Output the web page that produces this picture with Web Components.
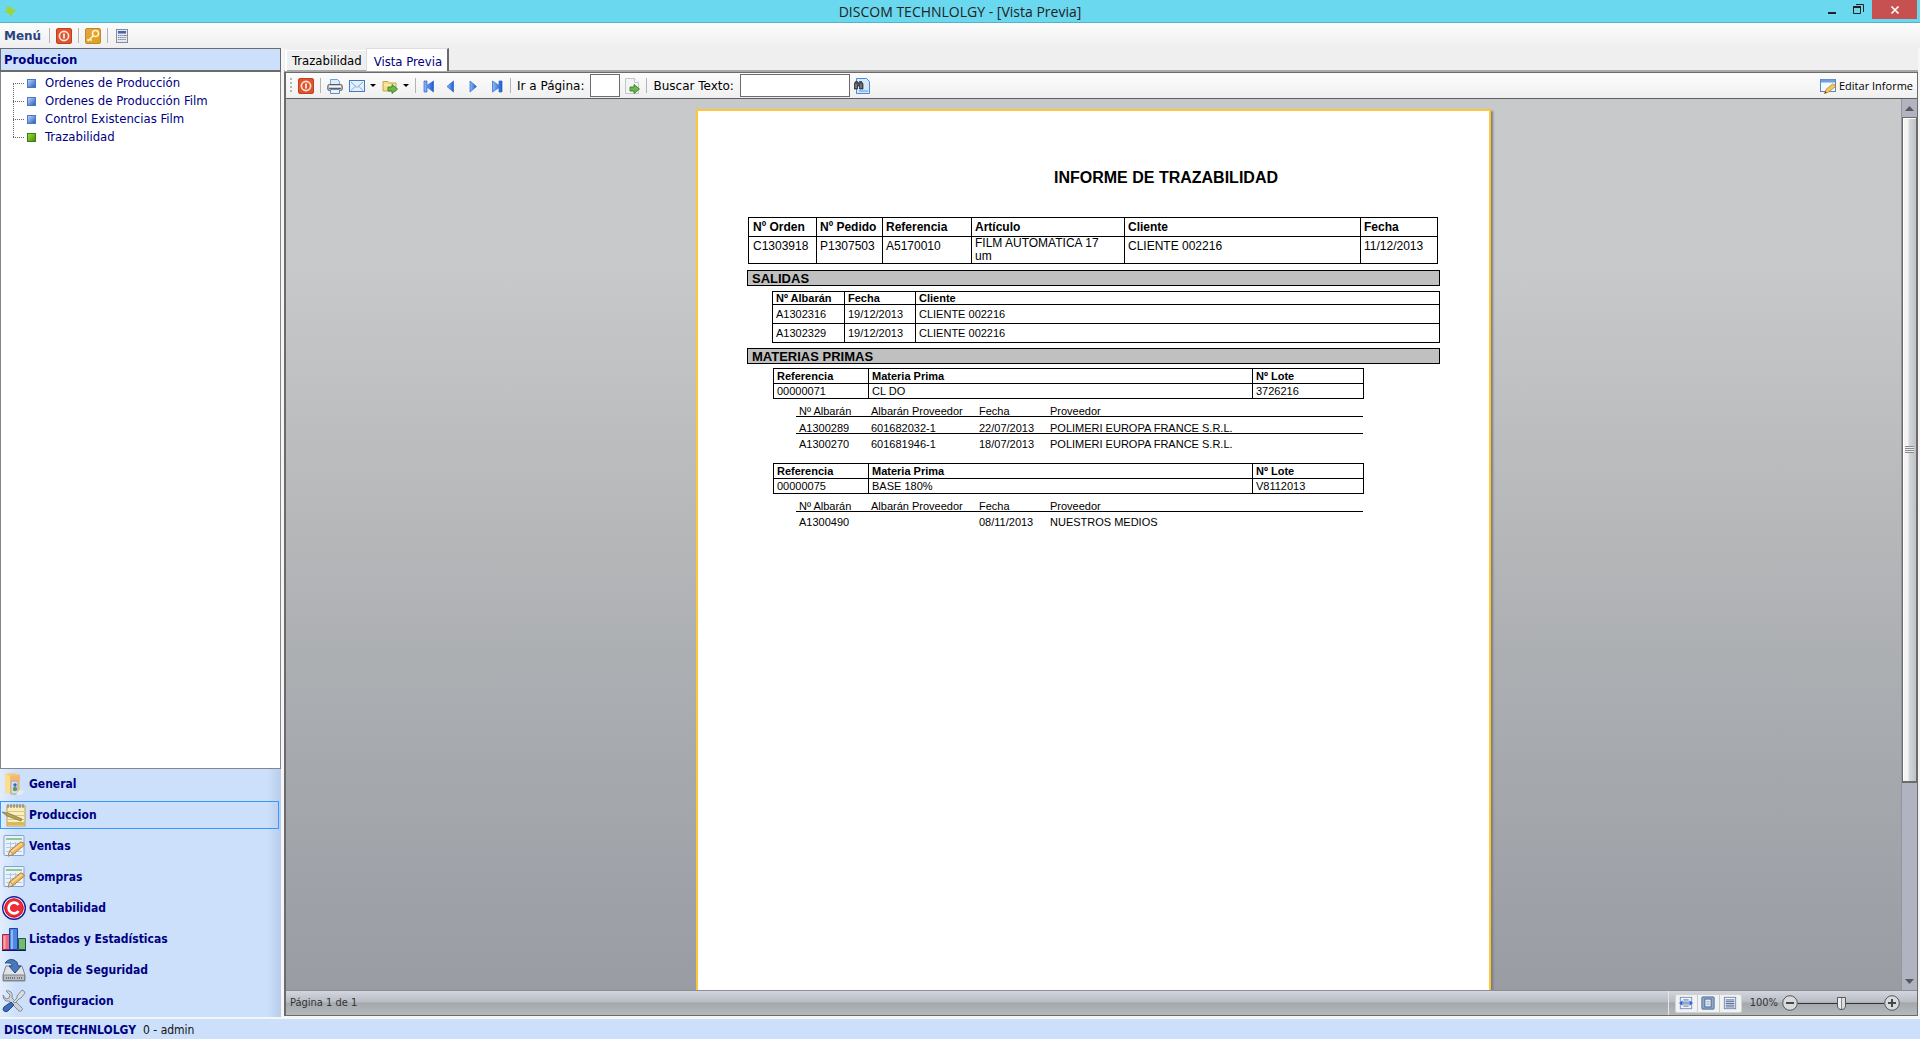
<!DOCTYPE html>
<html lang="es">
<head>
<meta charset="utf-8">
<title>DISCOM TECHNLOLGY - [Vista Previa]</title>
<style>
  :root {
    --ui: "DejaVu Sans Condensed", "DejaVu Sans", sans-serif;
    --wide: "DejaVu Sans", sans-serif;
    --segoe: "Open Sans", "Noto Sans", sans-serif;
    --navy: #00007f;
    --pale: #cce0fc;
  }
  body { margin: 0; font: 13px/18px var(--ui); color: #000; background: #fff; }
</style>
</head>
<body>
<app-window></app-window>
<script>
function define(name, css, html, setup) {
  const t = document.createElement('template');
  t.innerHTML = `<style>*{box-sizing:border-box}:host{box-sizing:border-box;display:block}${css}</style>${html}`;
  customElements.define(name, class extends HTMLElement {
    constructor() {
      super();
      this.attachShadow({ mode: 'open' }).append(t.content.cloneNode(true));
    }
    connectedCallback() { if (setup) setup.call(this, this.shadowRoot); }
  });
}

const folder = '<path d="M1 3.500h5l1.500 1.500H14v8H1z" fill="#f5dd86" stroke="#c9a548"/><path d="M2 7h11" stroke="#fff6c8"/>';
const greenArrow = '<path d="M6 9h4V6.500l5.500 4.500-5.500 4.500V13H6z" fill="#6db74a" stroke="#36812b" stroke-width=".9"/>';
const sheet = `<rect x="2" y="1.500" width="20" height="20" rx="1" fill="#e9f2fb" stroke="#7fa3cf"/><path d="M4 5h16" stroke="#8fc79a" stroke-width="2"/><path d="M4 9.500h16M4 13.500h16M4 17.500h16M8.500 8v12M13.500 8v12" stroke="#b4c9e8"/><path d="M6 22l2-5.500L18.500 8q3-.5 4 3L11 20.500z" fill="#efb85c" stroke="#b8813a"/><path d="M9 18L20 9.500" stroke="#fbdc9c" stroke-width="1.500"/><path d="M6 22l2-5.500 3 4z" fill="#f3dfbf" stroke="#8c6a3d" stroke-width=".6"/>`;
const power = '<rect x=".5" y=".5" width="15" height="15" rx="1.500" fill="url(#r)" stroke="#c2401f"/><circle cx="8" cy="8" r="4.600" fill="none" stroke="#ffe3d8" stroke-width="1.700"/><path d="M8 5.500v5" stroke="#fff" stroke-width="1.600"/>';
const navBar = '<linearGradient id="b" x1="0" x2="1"><stop stop-color="#8fbcf5"/><stop offset="1" stop-color="#1e5bd0"/></linearGradient>';
const small = body => `<g transform="translate(1 1) scale(.875)">${body}</g>`;
const ICONS = {
  star: [16, '<path d="M8 3l2 4 5 1-4 3-2.500 4L7 11.500 2 10l3-2-.5-4L7 5.500z" fill="#9bd53c"/>'],
  power: [16, '<linearGradient id="r" x2="0" y2="1"><stop stop-color="#e8512b"/><stop offset="1" stop-color="#d8562f"/></linearGradient>' + power],
  key: [16, '<linearGradient id="k" x2="1" y2="1"><stop stop-color="#e9a24a"/><stop offset="1" stop-color="#d9a312"/></linearGradient><rect x=".5" y=".5" width="15" height="15" rx="1.500" fill="url(#k)" stroke="#bf8a2b"/><circle cx="10.500" cy="5.500" r="3" fill="none" stroke="#fff3d0" stroke-width="1.600"/><path d="M8.500 7.500L3 13M5 11l1.600 1.600M3 13v-2" stroke="#fff3d0" stroke-width="1.500" fill="none"/>'],
  calc: [16, '<rect x="2.500" y="1.500" width="11" height="13" fill="#e6e9ee" stroke="#868c98"/><rect x="4" y="3" width="8" height="2.500" fill="#3d66b8"/><path d="M4 7.500h8M4 9.500h8M4 11.500h8" stroke="#7c8aa6" stroke-dasharray="1.500 .6"/><path d="M10.500 7.500h2" stroke="#e0503e"/>'],
  blue: [9, '<linearGradient id="q" x2="1" y2="1"><stop stop-color="#c3dcff"/><stop offset="1" stop-color="#2258b8"/></linearGradient><rect x=".5" y=".5" width="8" height="8" fill="url(#q)" stroke="#4a78c4"/>'],
  green: [9, '<linearGradient id="q" x2="1" y2="1"><stop stop-color="#a5e23c"/><stop offset="1" stop-color="#3c8a04"/></linearGradient><rect x=".5" y=".5" width="8" height="8" fill="url(#q)" stroke="#3f7d10"/>'],
  print: [16, '<path d="M3.500 7V1.500h7l2 2V7" fill="#dcedfb" stroke="#6f9fcd"/><rect x=".8" y="6.500" width="14.400" height="6" rx="1.500" fill="#c7ccd2" stroke="#565d66"/><path d="M2 8.500h12" stroke="#f4f6f8"/><path d="M2 10.500h12" stroke="#5b6168"/><path d="M3.500 11.500h9v4h-9z" fill="#e6f3ff" stroke="#6f8fb3"/>'],
  mail: [16, '<rect x=".5" y="2.500" width="15" height="11" fill="#e5f0fd" stroke="#4779bd"/><path d="M2 4l6 5.500L14 4M2 12.500l4.500-4.300M14 12.500L9.500 8.200" fill="none" stroke="#80a9dc"/>'],
  export: [16, folder + greenArrow],
  first: [16, navBar + '<path d="M2 3h3v4.500L11.500 3v11L5 9v5H2z" fill="url(#b)" stroke="#2866cc" stroke-width=".7"/>'],
  prev: [16, navBar + '<path d="M9.500 3v11L3 8.500z" fill="url(#b)" stroke="#2866cc" stroke-width=".7"/>'],
  next: [16, navBar + '<path d="M4 3v11l6.500-5.500z" fill="url(#b)" stroke="#2866cc" stroke-width=".7"/>'],
  last: [16, navBar + '<path d="M4.500 3L11 7.500V3h3v11h-3V9.500L4.500 14z" fill="url(#b)" stroke="#2866cc" stroke-width=".7"/>'],
  go: [16, '<path d="M1.500 .5h9l4 4v11h-13z" fill="#f3f4f4" stroke="#c3c7c9"/><path d="M10.500 .5v4h4" fill="#fff" stroke="#c3c7c9"/>' + greenArrow],
  find: [16, '<path d="M2.500 .5h10l3 3v12h-13z" fill="#d5e8fc" stroke="#4c8ad6"/><path d="M5 13h9" stroke="#8fc0f3" stroke-width="2"/><path d="M0 6l1.500-2.500h2L4 5h1l.5-1.500h2L9 6v5H5.500V8h-2v3H0z" fill="#4c5058" stroke="#24262b" stroke-width=".7"/><path d="M2 6v4M7 6v4" stroke="#a8adb5" stroke-width=".8"/>'],
  edit: [16, '<rect x=".5" y="1.500" width="15" height="12" fill="#f4f9ff" stroke="#5b87c0"/><path d="M1 3h14" stroke="#6f9fe0" stroke-width="3"/><path d="M4.500 15.500l1.500-4L12.500 6q2.500 0 3 2.500L8.500 14z" fill="#f4c55a" stroke="#b98428" stroke-width=".8"/><path d="M4.500 15.500l.8-2.200 1.400 1.400z" fill="#4b3a20"/>'],
  fit: [16, small('<rect x="1.500" y="1.500" width="13" height="13" fill="#eef3fa" stroke="#6f8db8"/><path d="M5 4.500h6M4 7h8M4 9h8M5 11.500h6" stroke="#44639a"/><path d="M0 8l4-3v6zM16 8l-4-3v6z" fill="#2c66da"/>')],
  page: [16, small('<rect x="1" y="1" width="14" height="14" rx="1" fill="#8fa9cc" stroke="#47658f"/><rect x="4.500" y="3.500" width="7" height="9" fill="#fff" stroke="#3c5888"/><path d="M6 6h4M6 8h4M6 10h4" stroke="#7088ad" stroke-width=".8"/>')],
  width: [16, small('<rect x="1.500" y="1.500" width="13" height="13" fill="#f2f5fa" stroke="#6682b0"/><path d="M3 4.500h10M3 6.500h10M3 8.500h10M3 10.500h10M3 12.500h10" stroke="#3d527f"/>')],
  general: [24, '<path d="M3 2l9-1 6 2v19l-6 1-9-3z" fill="#f6c878"/><path d="M3 2l5 2v18l-5-2z" fill="#fbdf8c"/><path d="M8 4l10-1v6H8z" fill="#f3b871"/><path d="M9 9h7v13H9z" fill="#d9dde4" stroke="#a3a8b2"/><circle cx="13" cy="13" r="1.700" fill="#3a62c8"/><circle cx="13" cy="17" r="2.200" fill="#4fa25c"/><path d="M17 18l6 1-4 4h-5z" fill="#e8eaf0"/>'],
  produccion: [24, '<rect x="5" y="3" width="18" height="20" fill="#faeebb" stroke="#b9a05f"/><path d="M6 8.500h16M6 12.500h16M6 16.500h16" stroke="#d6c68c"/><path d="M5 20.500h18" stroke="#d8b95a" stroke-width="3"/><path d="M6 1v4M9 1v4M12 1v4M15 1v4M18 1v4M21 1v4" stroke="#77706a"/><path d="M0 9l6 1 14 6-1 2L5 13z" fill="#b4a557" stroke="#7c7038" stroke-width=".7"/>'],
  sheet: [24, sheet],
  contab: [24, '<circle cx="12" cy="12" r="11.300" fill="#fff" stroke="#1a1a96" stroke-width="1.400"/><circle cx="12" cy="12" r="9.300" fill="#ee2b36" stroke="#c01020"/><path d="M16.500 9a5.400 5.400 0 1 0 0 6" fill="none" stroke="#fff" stroke-width="2.600"/>'],
  chart: [24, '<path d="M0 23.300h24" stroke="#12127a" stroke-width="1.400"/><path d="M.5 7.500h7v15h-7z" fill="#ef6b7b" stroke="#a82540"/><path d="M7.500 1.500h8v21h-8z" fill="#4d87e2" stroke="#1e3f9f"/><path d="M10 3v19" stroke="#8fb9f5" stroke-width="2"/><path d="M16.500 11.500h7v11h-7z" fill="#75b979" stroke="#1d5c3a"/><path d="M2.500 9v13" stroke="#f9a6ae" stroke-width="2"/>'],
  backup: [24, '<path d="M4 8h16l3 9v6H1v-6z" fill="#dfe2e6" stroke="#80858c"/><path d="M1.500 17h21v5.500h-21z" fill="#b9bdc3" stroke="#80858c"/><path d="M4 20h9M15 20h6" stroke="#71767e" stroke-width="2" stroke-dasharray="1 1"/><path d="M3 5q4-5 9-3 4 1.500 4 6h3l-6 7-6-7h3q0-4-7-3z" fill="#4a78b8" stroke="#274f8c"/>'],
  tools: [24, '<path d="M4 2l4 4-1 3-3 1-3-4q0 5 3 6l3 0 10 10q2 1 3-1t0-2L10 9q1-4-1-6T4 2z" fill="#cfd4da" stroke="#878d96"/><path d="M22 2l-2-1-5 6v2l-4 4 2 1 4-4 2-1 4-5z" fill="#d9dde2" stroke="#878d96"/><path d="M9 13l3 3-6 6q-2 1.500-4 0t0-4z" fill="#3e6db8" stroke="#254a86"/>'],
};

customElements.define('ui-icon', class extends HTMLElement {
  connectedCallback() {
    if (this.shadowRoot) return;
    const [n, body] = ICONS[this.getAttribute('name')];
    this.attachShadow({ mode: 'open' }).innerHTML =
      `<style>:host{display:block;flex:none;width:${n}px;height:${n}px}svg{display:block}</style><svg width="${n}" height="${n}" viewBox="0 0 ${n} ${n}" aria-hidden="true">${body}</svg>`;
  }
});

const BTN = 'button{border:0;background:none;padding:0;margin:0;color:inherit;font:inherit;display:flex;align-items:center}';

define('title-bar', `
  :host{display:grid;grid-template-columns:1fr auto 1fr;height:23px;background:#6ad8ee;border-bottom:1px solid #52b3cb;align-items:start;color:#222}
  ui-icon{margin:2px}
  h1{margin:0;font:14px/23px var(--segoe)}
  .win{display:flex;justify-content:flex-end;padding-right:3px}
  ${BTN} button{height:19px;width:26px;justify-content:center}
  .close{width:45px;background:#c75050}
`, `<ui-icon name="star"></ui-icon><h1><slot></slot></h1>
  <div class="win">
    <button aria-label="Minimizar"><svg width="12" height="12"><path d="M1 9h8" stroke="#222" stroke-width="2"/></svg></button>
    <button aria-label="Restaurar"><svg width="12" height="12"><path d="M3 .5h7.500V8M.5 3h7v6.500h-7z" fill="none" stroke="#222"/><path d="M0 3h8" stroke="#222" stroke-width="2"/></svg></button>
    <button class="close" aria-label="Cerrar"><svg width="10" height="10"><path d="M1.500 1.500l7 7M8.500 1.500l-7 7" stroke="#fff" stroke-width="1.700"/></svg></button>
  </div>`);

define('menu-bar', `
  :host{display:flex;height:25px;align-items:center;gap:6px;padding:0 4px;background:linear-gradient(#fcfcfc,#efefef)}
  ${BTN} .menu{font:bold 12px/18px var(--wide);color:#2a4480;padding-right:2px}
  i{width:1px;height:15px;background:#b4b4b4}
`, `<button class="menu">Menú</button><i></i>
  <button aria-label="Salir"><ui-icon name="power"></ui-icon></button><i></i>
  <button aria-label="Clave"><ui-icon name="key"></ui-icon></button><i></i>
  <button aria-label="Calculadora"><ui-icon name="calc"></ui-icon></button>`);

define('tree-item', `
  :host{display:flex;height:18px;align-items:center;position:relative}
  :host::before{content:"";position:absolute;left:0;top:-9px;height:18px;border-left:1px dotted #666}
  :host(:first-child)::before{display:none}
  .line{width:11px;border-top:1px dotted #666;margin-right:3px}
  a{color:var(--navy);text-decoration:none;margin-left:9px}
`, `<span class="line"></span><ui-icon name="blue"></ui-icon><a href="#"><slot></slot></a>`,
function (root) { if (this.hasAttribute('icon')) root.querySelector('ui-icon').replaceWith(Object.assign(document.createElement('template'), { innerHTML: `<ui-icon name="${this.getAttribute('icon')}"></ui-icon>` }).content); });

define('nav-item', `
  :host{height:28px}
  button{all:unset;box-sizing:border-box;display:flex;align-items:center;gap:3px;width:100%;height:28px;padding-left:2px;font:bold 12px/18px var(--ui);color:var(--navy)}
  :host([selected]) button{border:1px solid #3399ff;padding-left:1px}
`, `<button><span class="ic"></span><span><slot></slot></span></button>`,
function (root) { root.querySelector('.ic').innerHTML = `<ui-icon name="${this.getAttribute('icon')}"></ui-icon>`; });

define('side-panel', `
  :host{display:flex;flex-direction:column}
  h2{margin:0;height:24px;border:1px solid #6b6b6b;border-width:1px 1px 2px;background:var(--pale);font:bold 13px/21px var(--ui);color:var(--navy);padding:0 3px}
  .tree{flex:1;background:#fff;border:1px solid #85858c;border-top:0;padding:2px 0 0 12px}
  nav{display:flex;flex-direction:column;gap:3px;padding:1px 2px 2px 0;background:linear-gradient(90deg,#e2edfd,var(--pale) 16px calc(100% - 14px),#b9cdeb)}
`, `<h2>Produccion</h2>
  <div class="tree"><tree-item>Ordenes de Producción</tree-item><tree-item>Ordenes de Producción Film</tree-item><tree-item>Control Existencias Film</tree-item><tree-item icon="green">Trazabilidad</tree-item></div>
  <nav><nav-item icon="general">General</nav-item><nav-item icon="produccion" selected>Produccion</nav-item><nav-item icon="sheet">Ventas</nav-item><nav-item icon="sheet">Compras</nav-item><nav-item icon="contab">Contabilidad</nav-item><nav-item icon="chart">Listados y Estadísticas</nav-item><nav-item icon="backup">Copia de Seguridad</nav-item><nav-item icon="tools">Configuracion</nav-item></nav>`);

define('tab-strip', `
  :host{display:flex;height:25px;background:#efefef;box-shadow:inset 0 -1px #6b6b6b,inset 0 -3px #a9a9a9;padding-left:1px}
  button{all:unset;box-sizing:border-box;font:13px/18px var(--ui);height:21px;padding:0 4px 0 5px;border:1px solid #fff;border-width:1px 0 0 2px;margin-top:2px}
  .on{background:#fff;color:var(--navy);height:23px;margin-top:0;padding:3px 5px 0 7px;border:1px solid #ddd;border-right:2px solid #6b6b6b;border-bottom:0}
`, `<button>Trazabilidad</button><button class="on">Vista Previa</button>`);

define('tool-bar', `
  :host{display:flex;height:26px;align-items:center;gap:6px;padding:0 4px;background:linear-gradient(#fcfcfc,#f0f0f0);border-bottom:1px solid #5f5f5f;font:12px/18px var(--wide)}
  ${BTN} .grip{width:2px;height:15px;background:repeating-linear-gradient(#b5b5b5 0 2px,transparent 2px 4px)}
  i{width:1px;height:15px;background:#b4b4b4}
  .drop{width:5px;height:16px}
  .drop::before{content:"";border:3px solid transparent;border-top-color:#000;border-bottom:0;margin:0 -1px}
  .set{display:flex;gap:4px;align-items:center}
  input{height:23px;border:1px solid #6b6b6b;background:#fff;padding:0 3px;margin:0;font:inherit;outline:0}
  #pag{width:30px}#txt{width:110px}
  .edit{margin-left:auto;gap:3px;font:11px/18px var(--segoe)}
`, `<span class="grip"></span>
  <button aria-label="Cerrar"><ui-icon name="power"></ui-icon></button><i></i>
  <button aria-label="Imprimir"><ui-icon name="print"></ui-icon></button>
  <button aria-label="Enviar"><ui-icon name="mail"></ui-icon></button><button class="drop" aria-label="Opciones de envío"></button>
  <button aria-label="Exportar"><ui-icon name="export"></ui-icon></button><button class="drop" aria-label="Opciones de exportación"></button><i></i>
  <button aria-label="Primera"><ui-icon name="first"></ui-icon></button>
  <button aria-label="Anterior"><ui-icon name="prev"></ui-icon></button>
  <button aria-label="Siguiente"><ui-icon name="next"></ui-icon></button>
  <button aria-label="Última"><ui-icon name="last"></ui-icon></button><i></i>
  <label for="pag">Ir a Página:</label>
  <span class="set"><input id="pag"><button aria-label="Ir"><ui-icon name="go"></ui-icon></button></span><i></i>
  <label for="txt">Buscar Texto:</label>
  <span class="set"><input id="txt"><button aria-label="Buscar"><ui-icon name="find"></ui-icon></button></span>
  <button class="edit"><ui-icon name="edit"></ui-icon>Editar Informe</button>`);

const lot = (ref, mat, lote, rows) => `
  <table class="lot"><colgroup><col class="c95"><col><col class="c111"></colgroup>
    <tr><th>Referencia</th><th>Materia Prima</th><th>Nº Lote</th></tr>
    <tr><td>${ref}</td><td>${mat}</td><td>${lote}</td></tr></table>
  <table class="sub"><colgroup><col class="c72"><col class="c108"><col class="c71"><col></colgroup>
    <tr><th>Nº Albarán</th><th>Albarán Proveedor</th><th>Fecha</th><th>Proveedor</th></tr>
    ${rows.map(r => `<tr>${r.map(c => `<td>${c}</td>`).join('')}</tr>`).join('')}</table>`;

define('report-page', `
  :host{width:795px;min-height:1123px;background:#fff;border:2px solid #ffc637;box-shadow:2px 2px 2px #7b7d80;padding:58px 49px 0;font:11px/13px "Liberation Sans",Arial,sans-serif}
  h1{margin:0 0 30px 307px;font:bold 16px/18px "Liberation Sans",Arial,sans-serif}
  h2{margin:5px 0 4px;height:16px;border:1px solid #000;background:#c0c0c0;font:bold 13px/15px "Liberation Sans",Arial,sans-serif;padding-left:4px}
  h2:first-of-type{margin:6px 0 5px}
  table{table-layout:fixed;border-spacing:0;width:100%}
  th,td{text-align:left;padding:0 0 0 3px;white-space:nowrap;overflow:hidden}
  .order,.out,.lot{border:solid #000;border-width:1px 0 0 1px}
  .order :is(th,td),.out :is(th,td),.lot :is(th,td){border:solid #000;border-width:0 1px 1px 0}
  .order{font-size:12px;width:calc(100% - 3px);margin-left:1px}
  .order th{height:19px}.order td{height:27px;vertical-align:top;padding-top:3px;white-space:normal}
  .order :is(th,td):first-child{padding-left:4px}
  .order td.tight{padding:0 20px 0 3px}
  .out{width:calc(100% - 25px);margin-left:25px}
  .out th{height:13px;line-height:12px}.out td{height:19px;padding-top:1px}
  .lot{width:591px;margin-left:26px}
  .lot tr{height:15px}.lot :is(th,td){line-height:14px}
  .sub{width:567px;margin:4px 0 12px 49px}
  .sub :is(th,td){font-weight:normal;height:17px;vertical-align:bottom;line-height:13px}
  .sub tr:not(:last-child)>*{height:14px;line-height:10px;overflow:visible;border-bottom:1px solid #000}
  .sub tr:nth-child(2)>*{height:17px}
  .c67{width:68px}.c66{width:66px}.c89{width:89px}.c153{width:153px}.c77{width:77px}
  .c72{width:72px}.c71{width:71px}.c95{width:95px}.c111{width:111px}.c108{width:108px}
`, `<h1>INFORME DE TRAZABILIDAD</h1>
  <table class="order"><colgroup><col class="c67"><col class="c66"><col class="c89"><col class="c153"><col><col class="c77"></colgroup>
    <tr><th>Nº Orden</th><th>Nº Pedido</th><th>Referencia</th><th>Artículo</th><th>Cliente</th><th>Fecha</th></tr>
    <tr><td>C1303918</td><td>P1307503</td><td>A5170010</td><td class="tight">FILM AUTOMATICA 17 um</td><td>CLIENTE 002216</td><td>11/12/2013</td></tr></table>
  <h2>SALIDAS</h2>
  <table class="out"><colgroup><col class="c72"><col class="c71"><col></colgroup>
    <tr><th>Nº Albarán</th><th>Fecha</th><th>Cliente</th></tr>
    <tr><td>A1302316</td><td>19/12/2013</td><td>CLIENTE 002216</td></tr>
    <tr><td>A1302329</td><td>19/12/2013</td><td>CLIENTE 002216</td></tr></table>
  <h2>MATERIAS PRIMAS</h2>
  ${lot('00000071', 'CL DO', '3726216', [['A1300289', '601682032-1', '22/07/2013', 'POLIMERI EUROPA FRANCE S.R.L.'], ['A1300270', '601681946-1', '18/07/2013', 'POLIMERI EUROPA FRANCE S.R.L.']])}
  ${lot('00000075', 'BASE 180%', 'V8112013', [['A1300490', '', '08/11/2013', 'NUESTROS MEDIOS']])}`);

define('scroll-rail', `
  :host{display:flex;flex-direction:column;width:16px;background:#b1b4c0;border-left:1px solid #94969f}
  ${BTN} button{height:18px;justify-content:center}
  .thumb{flex:0 1 666px;border:1px solid #6b6b6b;border-width:1px 1px 2px 1px;box-shadow:inset 1px 1px #fff;background:linear-gradient(90deg,#f4f2f3 40%,#d6d8da 45%,#bfc2c5);display:flex;align-items:center;justify-content:center}
  .thumb::before{content:"";width:9px;height:7px;background:repeating-linear-gradient(#8a8a8a 0 1px,#eee 1px 2px)}
  .rest{flex:1}
`, `<button aria-label="Arriba"><svg width="9" height="5"><path d="M0 5l4.500-5L9 5z" fill="#55585f"/></svg></button>
  <div class="thumb"></div><div class="rest"></div>
  <button aria-label="Abajo"><svg width="9" height="5"><path d="M0 0l4.500 5L9 0z" fill="#55585f"/></svg></button>`);

define('report-viewer', `
  :host{display:flex;min-height:0;overflow:hidden;background:linear-gradient(#c8c9cb 18%,#bcbdbe 38%,#a9acb0 68%,#999ca3)}
  .canvas{flex:1;min-width:0;overflow:hidden;display:flex;justify-content:center;align-items:flex-start;padding-top:10px}
`, `<div class="canvas"><report-page></report-page></div><scroll-rail></scroll-rail>`);

define('status-strip', `
  :host{display:flex;height:25px;align-items:center;border-top:1px solid #8b8e94;background:linear-gradient(#d3d6df,#b8bcc4 45%,#a2a8ac 50%,#b4babc);font-size:11px;color:#333;padding:0 17px 0 4px}
  .zoom{margin-left:auto;display:flex;align-items:center;height:24px;border-left:1px solid #e4e6ea;padding-left:6px;gap:4px}
  ${BTN} .views{display:flex;border:1px solid #d5d2cb;border-radius:2px;background:#f1f2f4;height:19px;margin-right:4px}
  .views button{width:21px;justify-content:center}
  .views button+button{border-left:1px solid #ccc;width:22px}
  input{appearance:none;width:86px;height:16px;margin:0 -4px;background:linear-gradient(#333,#333) center/100% 1px no-repeat}
  input::-webkit-slider-thumb{appearance:none;width:9px;height:13px;border:1px solid #55585c;border-radius:1px 1px 5px 5px;background:linear-gradient(90deg,#eee 3px,#888 3px 4px,#ddd 4px)}
`, `<span>Página 1 de 1</span>
  <div class="zoom"><span class="views"><button aria-label="Ancho de página"><ui-icon name="fit"></ui-icon></button><button aria-label="Página completa"><ui-icon name="page"></ui-icon></button><button aria-label="Continuo"><ui-icon name="width"></ui-icon></button></span>
  <label for="z">100%</label>
  <button aria-label="Alejar"><svg width="16" height="16"><circle cx="8" cy="8" r="7.300" fill="#d9dadb" stroke="#55585c"/><path d="M4 8h8" stroke="#44474b" stroke-width="2"/></svg></button>
  <input id="z" type="range" value="50">
  <button aria-label="Acercar"><svg width="16" height="16"><circle cx="8" cy="8" r="7.300" fill="#d9dadb" stroke="#55585c"/><path d="M4 8h8M8 4v8" stroke="#44474b" stroke-width="2"/></svg></button></div>`);

define('main-area', `
  :host{display:flex;flex-direction:column;min-width:0;padding-bottom:1px}
  .frame{flex:1;min-height:0;display:flex;flex-direction:column;border:solid #6b6b6b;border-width:0 1px 1px 2px}
  report-viewer{flex:1}
`, `<tab-strip></tab-strip><div class="frame"><tool-bar></tool-bar><report-viewer></report-viewer><status-strip></status-strip></div>`);

define('app-footer', `
  :host{height:20px;background:var(--pale);padding:1px 4px 0;display:flex;gap:7px;font:12px/20px var(--ui);color:#111}
  b{color:var(--navy)}
`, `<b><slot name="company"></slot></b><span><slot></slot></span>`);

define('app-window', `
  :host{display:flex;flex-direction:column;height:100vh;overflow:hidden}
  main{flex:1;min-height:0;display:grid;grid-template-columns:281px minmax(0,1fr);gap:3px;padding:0 2px 2px 0;background:#f6f6f6}
  main>*{min-height:0}
`, `<title-bar>DISCOM TECHNLOLGY - [Vista Previa]</title-bar><menu-bar></menu-bar>
  <main><side-panel></side-panel><main-area></main-area></main>
  <app-footer><span slot="company">DISCOM TECHNLOLGY</span>0 - admin</app-footer>`);
</script>
</body>
</html>
